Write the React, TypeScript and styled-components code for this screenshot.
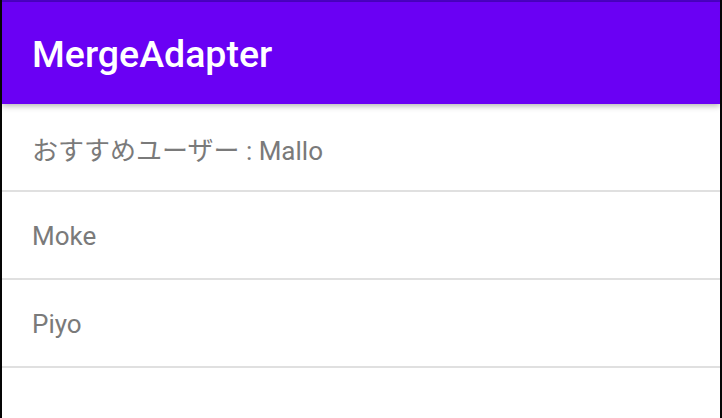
import styled, { createGlobalStyle } from "styled-components"

const GlobalStyle = createGlobalStyle`
    html, body {
        margin: 0;
        padding: 0;
        background: #fff;
    }
    body {
        font-family: Roboto, "Noto Sans CJK JP", sans-serif;
    }
`

const items = ["おすすめユーザー : Mallo", "Moke", "Piyo"]

export default function App() {
    return (<Screen>
        <GlobalStyle />
        <StatusStrip />
        <AppBar>
            <Title>MergeAdapter</Title>
        </AppBar>
        <List>
            {items.map((item) => (
                <Row key={item}>{item}</Row>
            ))}
        </List>
    </Screen>)
}

const Screen = styled.div`
    width: 718px;
    height: 418px;
    border-left: 2px solid #050505;
    border-right: 2px solid #050505;
    background: #fff;
    overflow: hidden;
    position: relative;
`

const StatusStrip = styled.div`
    height: 2px;
    background: #4c00c8;
`

const AppBar = styled.div`
    height: 102px;
    background: #6a00f4;
    display: flex;
    align-items: center;
    padding-left: 30px;
    box-shadow: 0 2px 6px rgba(0, 0, 0, 0.3);
    position: relative;
    z-index: 1;
`

const Title = styled.h1`
    margin: 0;
    color: #fff;
    font-size: 37.5px;
    font-weight: 500;
    padding-top: 1px;
`

const List = styled.div`
    display: flex;
    flex-direction: column;
`

const Row = styled.div`
    box-sizing: border-box;
    height: 88px;
    border-bottom: 2px solid #e0e0e0;
    display: flex;
    align-items: center;
    padding-left: 30px;
    padding-top: 2px;
    font-size: 26px;
    color: #7a7a7a;
`
